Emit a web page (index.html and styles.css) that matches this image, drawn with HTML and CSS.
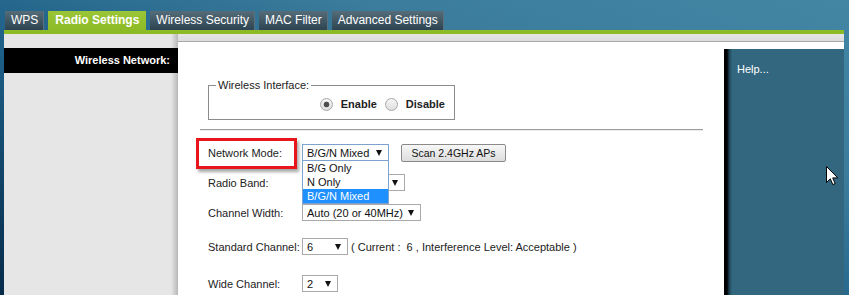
FILE: index.html
```html
<!DOCTYPE html>
<html lang="en">
<head>
  <meta charset="UTF-8">
  <title>Radio Settings</title>
  <link rel="stylesheet" href="styles.css">
</head>
<body>
  <div class="tabs">
    <div class="tab">WPS</div>
    <div class="tab active">Radio Settings</div>
    <div class="tab">Wireless Security</div>
    <div class="tab">MAC Filter</div>
    <div class="tab">Advanced Settings</div>
  </div>

  <div class="page">
    <div class="side">
      <div class="side-title">Wireless Network:</div>
    </div>

    <div class="main">
      <div class="band"></div>
      <div class="body">
        <div class="content">
          <fieldset class="iface">
            <legend>Wireless Interface:</legend>
            <div class="radios">
              <span class="radio checked"></span><span class="radio-label">Enable</span>
              <span class="radio"></span><span class="radio-label">Disable</span>
            </div>
          </fieldset>

          <div class="divider"></div>

          <div class="row">
            <div class="highlight"></div>
            <span class="label">Network Mode:</span>
            <div class="select focus w-mode">
              <span>B/G/N Mixed</span><i class="arrow"></i>
              <ul class="dropdown">
                <li>B/G Only</li>
                <li>N Only</li>
                <li class="selected">B/G/N Mixed</li>
              </ul>
            </div>
            <button class="btn">Scan 2.4GHz APs</button>
          </div>

          <div class="row">
            <span class="label">Radio Band:</span>
            <div class="select w-band"><span></span><i class="arrow"></i></div>
          </div>

          <div class="row">
            <span class="label">Channel Width:</span>
            <div class="select w-width"><span>Auto (20 or 40MHz)</span><i class="arrow"></i></div>
          </div>

          <div class="row gap-lg">
            <span class="label">Standard Channel:</span>
            <div class="select w-std"><span>6</span><i class="arrow"></i></div>
            <span class="note">( Current :&nbsp; 6 , Interference Level: Acceptable )</span>
          </div>

          <div class="row gap-xl">
            <span class="label">Wide Channel:</span>
            <div class="select w-wide"><span>2</span><i class="arrow"></i></div>
          </div>
        </div>

        <div class="help">Help...</div>
      </div>
    </div>
  </div>

  <svg class="cursor" width="13" height="20" viewBox="0 0 13 20">
    <path d="M0.5 0.5 L0.5 16.5 L4.3 12.8 L6.8 18.6 L9.2 17.6 L6.7 11.9 L11.8 11.9 Z" fill="#fff" stroke="#000" stroke-width="1" stroke-linejoin="miter"/>
  </svg>
</body>
</html>
```

FILE: styles.css
```css
* { box-sizing: border-box; }

html, body { height: 100%; }

body {
  margin: 0;
  display: flex;
  flex-direction: column;
  overflow: hidden;
  font-family: 'Liberation Sans', Arial, sans-serif;
  font-size: 11px;
  color: #222;
  background: linear-gradient(200deg, #4386a4 0%, #3b7c9c 30%, #1d5f86 60%, #062b4b 100%);
}

/* tabs */
.tabs {
  display: flex;
  gap: 4px;
  margin: 11px 0 0 5px;
  height: 19px;
}

.tab {
  padding: 0 6px;
  line-height: 19px;
  font-size: 12px;
  color: #fff;
  background: linear-gradient(#566d79, #2c4351);
  box-shadow: inset -1px 0 0 #5d717c;
}

.tab.active {
  padding: 0 7px;
  font-weight: bold;
  background: linear-gradient(#9bc537, #8cbb26);
  box-shadow: none;
}

/* page frame */
.page {
  flex: 1;
  display: flex;
  width: 840px;
  margin-left: 4px;
  border-top: 4px solid #8cbb26;
}

.side {
  width: 174px;
  background: linear-gradient(to right, #e6e6e6 0, #e6e6e6 167px, #b7b7b7 174px);
}

.side-title {
  margin-top: 14px;
  height: 25px;
  line-height: 25px;
  padding-right: 8px;
  text-align: right;
  font-weight: bold;
  color: #fff;
  background: #000;
}

.main {
  flex: 1;
  display: flex;
  flex-direction: column;
}

.band {
  height: 8px;
  background: linear-gradient(#e6e6e6, #dcdcdc);
  border-bottom: 1px solid #a9a9a9;
}

.body {
  flex: 1;
  display: flex;
  background: #fff;
}

.content {
  width: 546px;
}

.help {
  flex: 1;
  margin-top: 7px;
  padding: 14px 0 0 13px;
  color: #fff;
  background: linear-gradient(to right, #000 0, #000 3px, #1b3e4f 5px, #33677f 8px);
}

/* wireless interface box */
.iface {
  width: 247px;
  margin: 36px 0 0 30px;
  padding: 0 9px 7px 0;
  border: 1px solid #8c8c8c;
}

.iface legend {
  margin-left: 7px;
  padding: 0 2px;
  line-height: 14px;
  color: #222;
}

.radios {
  display: flex;
  justify-content: flex-end;
  align-items: center;
  height: 16px;
  margin-top: 4px;
}

.radio {
  width: 13px;
  height: 13px;
  margin-right: 8px;
  border: 1px solid #a8a8a8;
  border-radius: 50%;
  background: linear-gradient(#f6f6f6, #dedede);
}

.radio.checked {
  background: radial-gradient(circle, #4d4d4d 0, #4d4d4d 2.5px, transparent 3.2px), linear-gradient(#f6f6f6, #dedede);
}

.radio-label {
  font-weight: bold;
  margin-right: 8px;
}

.radio-label:last-child { margin-right: 0; }

.divider {
  margin: 9px 21px 0 22px;
  border-top: 1px solid #9e9e9e;
  border-bottom: 1px solid #ececec;
}

/* form rows */
.row {
  position: relative;
  display: flex;
  align-items: center;
  height: 17px;
  margin-top: 13px;
  padding-left: 30px;
}

.row.gap-lg { margin-top: 17px; }
.row.gap-xl { margin-top: 20px; }

.label {
  width: 94px;
  flex-shrink: 0;
}

.select {
  position: relative;
  display: flex;
  align-items: center;
  justify-content: space-between;
  height: 17px;
  padding: 0 6px 0 4px;
  border: 1px solid #a9a9a9;
  background: #fff;
  color: #111;
  white-space: nowrap;
}

.select.focus { border-color: #7da2ce; }

.w-mode { width: 87px; }
.w-band { width: 103px; }
.w-width { width: 119px; }
.w-std { width: 46px; }
.w-wide { width: 36px; }

.arrow {
  width: 0;
  height: 0;
  border-left: 3px solid transparent;
  border-right: 3px solid transparent;
  border-top: 6px solid #111;
}

.dropdown {
  position: absolute;
  z-index: 2;
  top: 15px;
  left: -1px;
  width: 87px;
  margin: 0;
  padding: 0;
  list-style: none;
  border: 1px solid #7da2ce;
  background: #fff;
}

.dropdown li {
  height: 14px;
  line-height: 14px;
  padding-left: 4px;
}

.dropdown li.selected {
  color: #fff;
  background: #1e90ff;
}

.btn {
  width: 105px;
  height: 18px;
  margin-left: 12px;
  padding: 0;
  font-family: inherit;
  font-size: 10.5px;
  color: #111;
  border: 1px solid #8a8a8a;
  border-radius: 2px;
  background: linear-gradient(#f7f7f7, #dddddd);
}

.note {
  margin-left: 3px;
  white-space: nowrap;
}

.highlight {
  position: absolute;
  left: 18px;
  top: -6px;
  width: 101px;
  height: 31px;
  border: 3px solid #e8161b;
  box-shadow: 2px 3px 3px rgba(0, 0, 0, 0.35);
}

.cursor {
  position: absolute;
  left: 826px;
  top: 166px;
}
```
